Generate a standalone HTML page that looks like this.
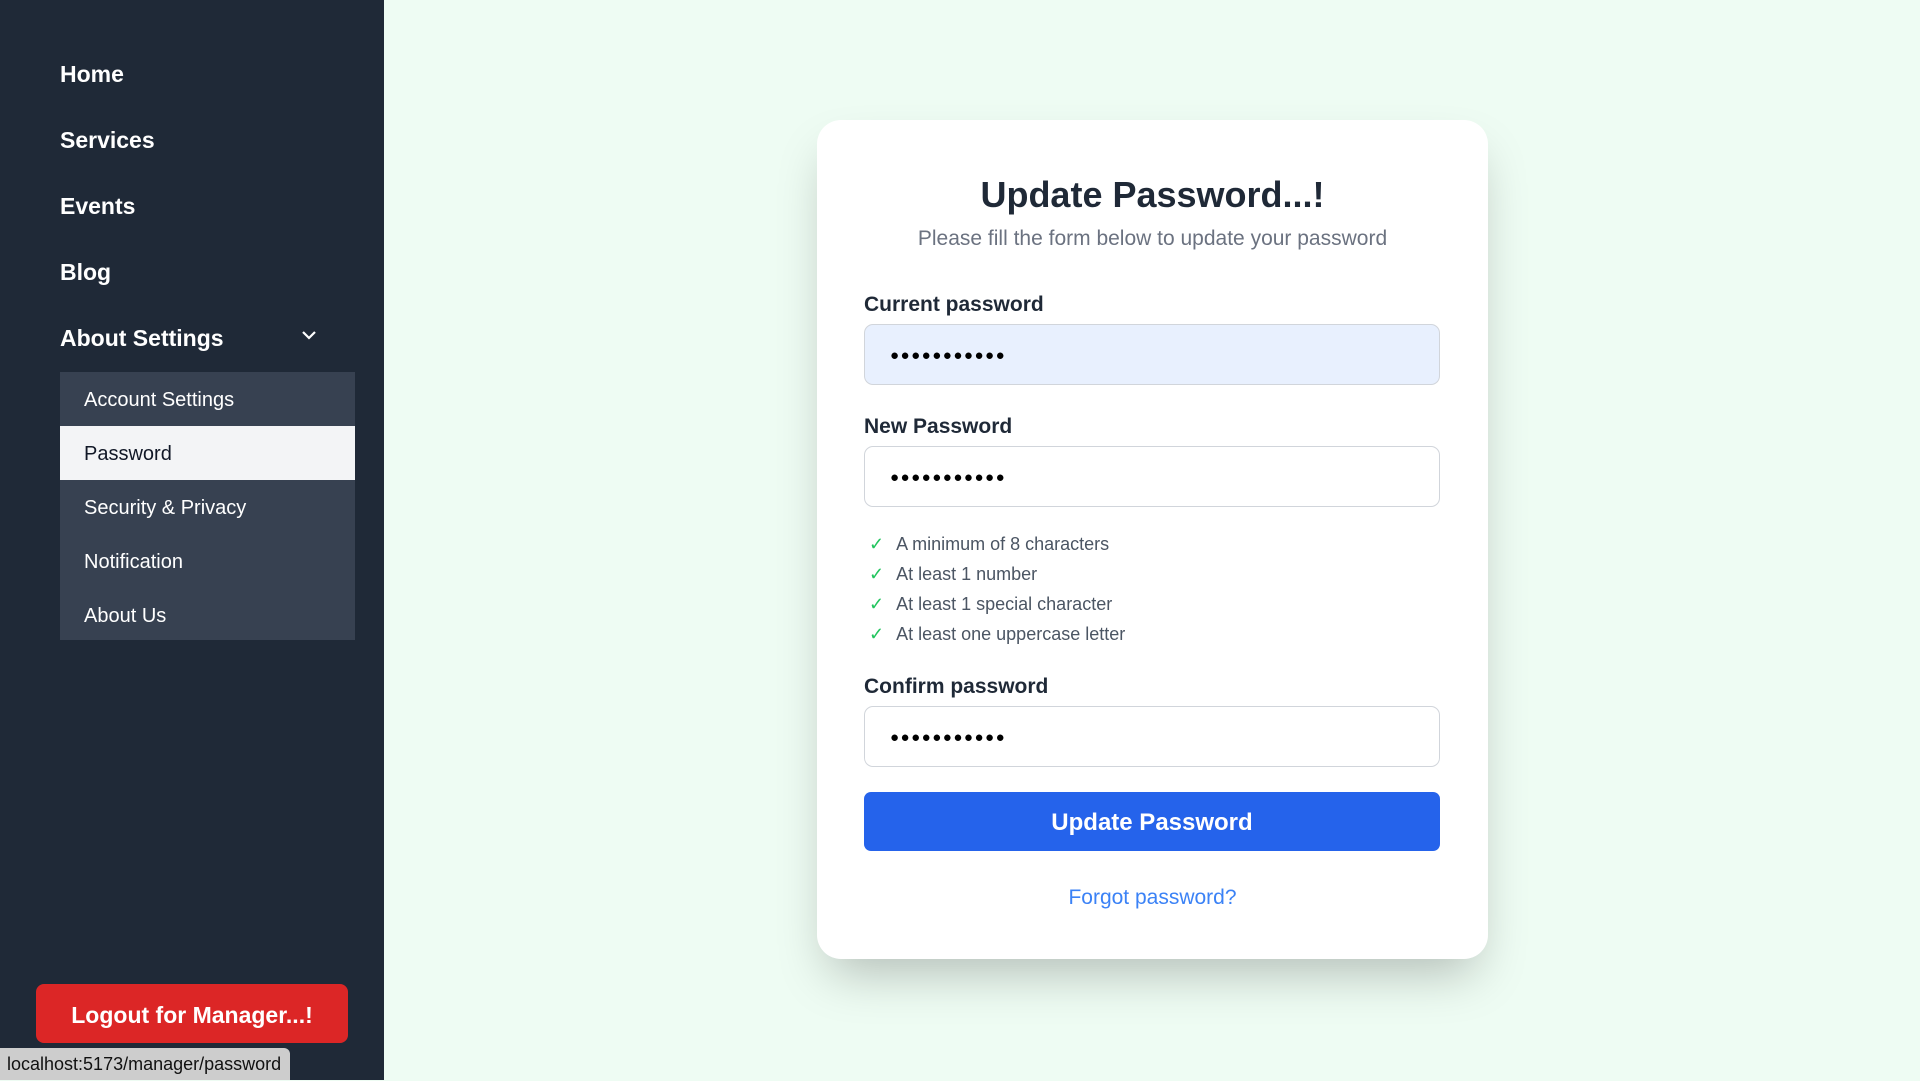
<!DOCTYPE html>
<html><head><meta charset="utf-8"><style>
*{box-sizing:border-box;margin:0;padding:0}
body{width:1920px;height:1080px;overflow:hidden;background:#eefcf3;font-family:"Liberation Sans",sans-serif;position:relative}
.side{position:absolute;left:0;top:0;width:384px;height:1080px;background:#1f2937}
.nav{position:absolute;left:60px;color:#fff;font-weight:bold;font-size:23px;line-height:30px}
.sub{position:absolute;left:60px;top:372px;width:295px;height:268px;background:#374151}
.sub div{height:54px;line-height:56px;padding-left:24px;color:#fff;font-size:20px}
.sub .act{background:#f3f4f6;color:#111827}
.logout{position:absolute;left:36px;top:984px;width:312px;height:59px;background:#dc2626;border-radius:8px;color:#fff;font-weight:bold;font-size:23px;text-align:center;line-height:62px}
.status{position:absolute;left:0;top:1048px;width:290px;height:32px;background:#cdcdcd;border-top-right-radius:6px;font-size:18px;line-height:33px;padding-left:7px;color:#111}
.card{position:absolute;left:817px;top:120px;width:671px;height:839px;background:#fff;border-radius:24px;box-shadow:0 25px 50px -12px rgba(0,0,0,.25)}
.title{position:absolute;left:0;width:100%;text-align:center;top:173px;font-size:36px;font-weight:bold;color:#1f2937;line-height:44px}
.subt{position:absolute;left:0;width:100%;text-align:center;top:227px;font-size:21px;color:#6b7280;line-height:24px}
.lbl{position:absolute;left:864px;font-size:21px;font-weight:bold;color:#1f2937;line-height:26px}
.inp{position:absolute;left:864px;width:576px;height:61px;border:1px solid #d1d5db;border-radius:9px;background:#fff;padding-left:25px;font-size:15px;line-height:61px;letter-spacing:1.5px;color:#000}
.chk{position:absolute;left:869px;font-size:18px;color:#4b5563;line-height:22px}
.chk span{color:#22c55e;margin-right:12px}
.btn{position:absolute;left:864px;top:792px;width:576px;height:59px;background:#2563eb;border-radius:7px;color:#fff;font-size:24px;font-weight:bold;text-align:center;line-height:62px}
.forgot{position:absolute;left:817px;width:671px;text-align:center;top:885px;font-size:21px;color:#3b82f6;line-height:26px}
</style></head><body>
<div class="side">
<div class="nav" style="top:59px">Home</div>
<div class="nav" style="top:125px">Services</div>
<div class="nav" style="top:191px">Events</div>
<div class="nav" style="top:257px">Blog</div>
<div class="nav" style="top:323px">About Settings</div>
<svg style="position:absolute;left:301px;top:329px" width="16" height="12" viewBox="0 0 16 12"><path d="M2 3l6 6 6-6" fill="none" stroke="#fff" stroke-width="2.2"/></svg>
<div class="sub"><div>Account Settings</div><div class="act">Password</div><div>Security &amp; Privacy</div><div>Notification</div><div>About Us</div></div>
<div class="logout">Logout for Manager...!</div>
</div>
<div class="status">localhost:5173/manager/password</div>
<div class="card"></div>
<div style="position:absolute;left:817px;width:671px;top:0">
<div class="title">Update Password...!</div>
<div class="subt">Please fill the form below to update your password</div>
</div>
<div class="lbl" style="top:292px">Current password</div>
<div class="inp" style="top:324px;background:#e8f0fe">●●●●●●●●●●●</div>
<div class="lbl" style="top:414px">New Password</div>
<div class="inp" style="top:446px">●●●●●●●●●●●</div>
<div class="chk" style="top:533px"><span>✓</span>A minimum of 8 characters</div>
<div class="chk" style="top:563px"><span>✓</span>At least 1 number</div>
<div class="chk" style="top:593px"><span>✓</span>At least 1 special character</div>
<div class="chk" style="top:623px"><span>✓</span>At least one uppercase letter</div>
<div class="lbl" style="top:674px">Confirm password</div>
<div class="inp" style="top:706px">●●●●●●●●●●●</div>
<div class="btn">Update Password</div>
<div class="forgot">Forgot password?</div>
</body></html>
